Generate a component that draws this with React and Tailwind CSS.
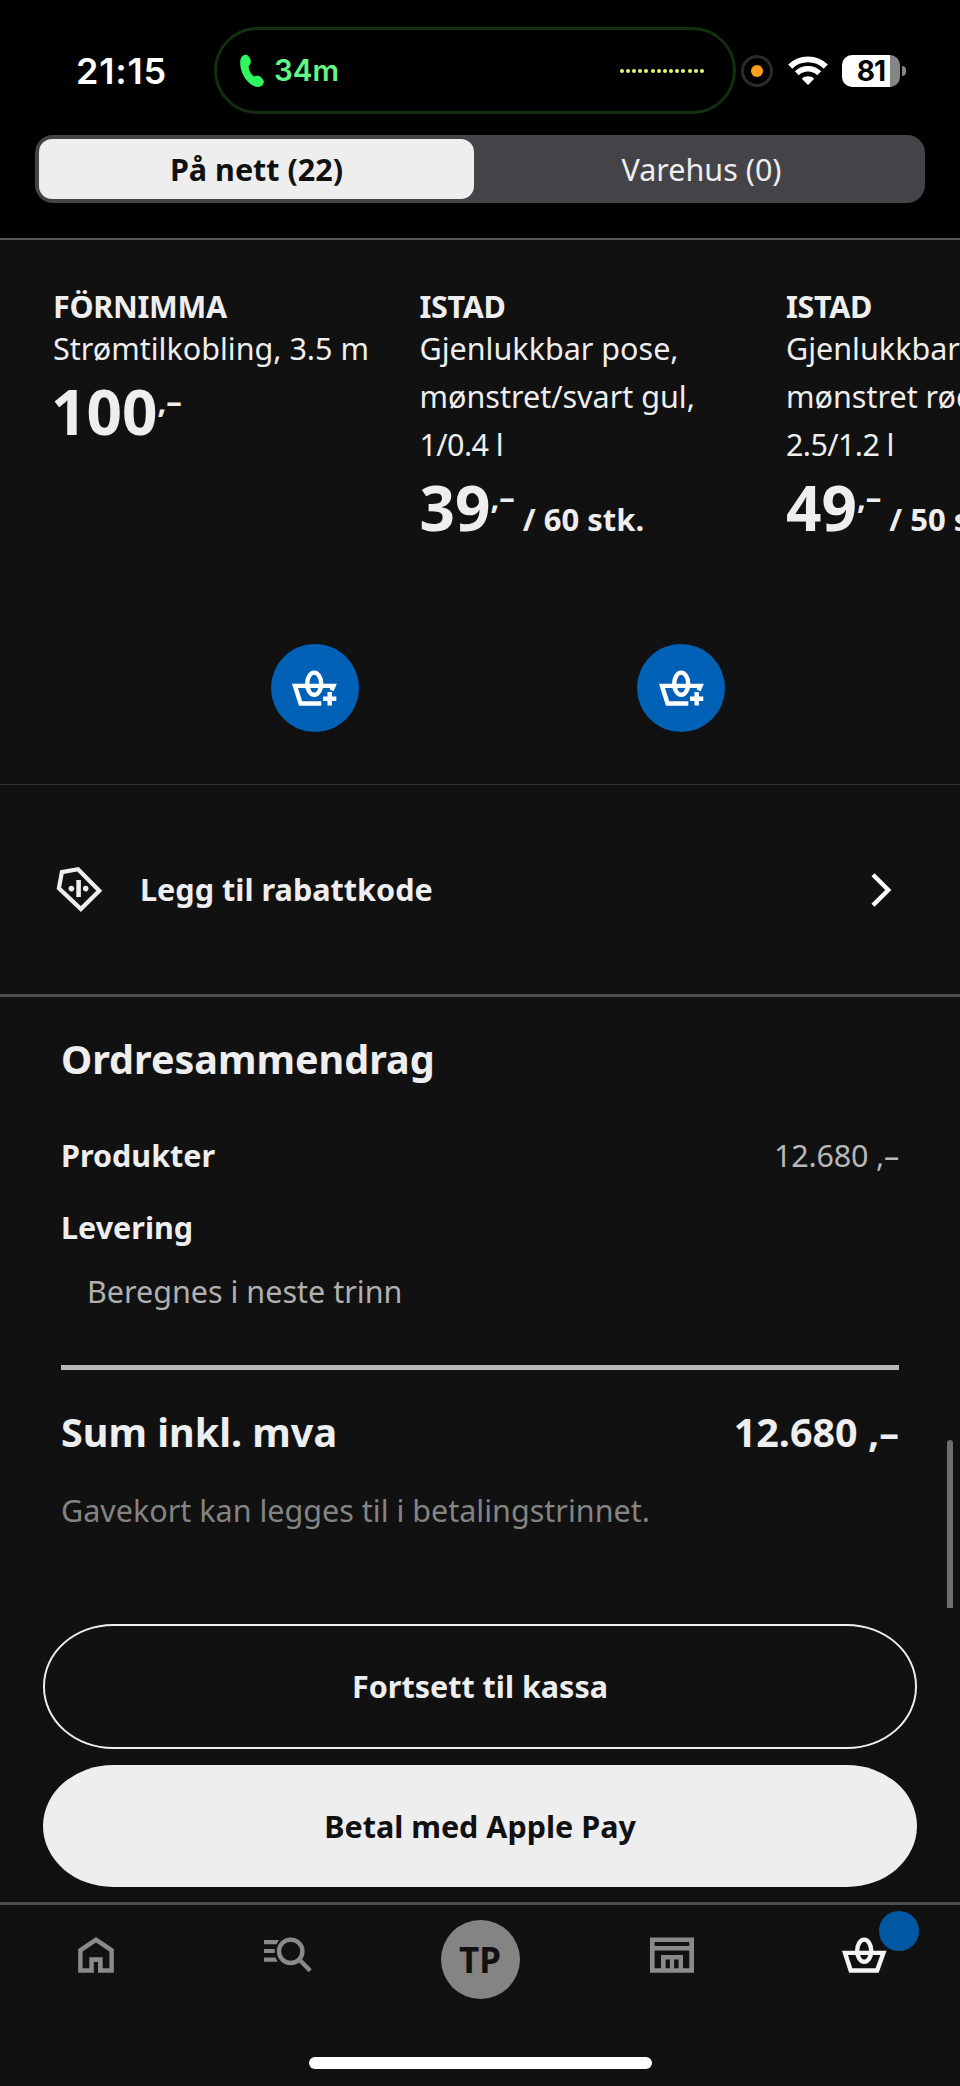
import React, { useState } from 'react'

const products = [
    { name: 'FÖRNIMMA', lines: ['Strømtilkobling, 3.5 m'], price: '100' },
    { name: 'ISTAD', lines: ['Gjenlukkbar pose,', 'mønstret/svart gul,'], size: '1/0.4 l', price: '39', unit: '/ 60 stk.' },
    { name: 'ISTAD', lines: ['Gjenlukkbar pose,', 'mønstret rød/rosa,'], size: '2.5/1.2 l', price: '49', unit: '/ 50 stk.' },
]

const PhoneIcon = () => (
    <svg width="28" height="36" viewBox="0 0 28 36" fill="#30f75f">
        <path d="M7 1.8C9.6 1.2 11.2 3.4 12.4 6.6C13.4 9.2 12.8 11 10.6 13.4C10.4 16.8 13 21.2 16 23.4C19 22.4 20.8 22.4 22.6 24C25 26.2 26.4 27.8 25.6 30C24.8 32.4 22.6 34 20 34C15.6 33.8 11.4 31 8 26.6C4.6 22 2.2 15.6 2.2 10C2.2 5.6 3.6 2.6 7 1.8Z" />
    </svg>
)

const WifiIcon = () => (
    <svg width="40" height="30" viewBox="0 0 40 30" fill="none" stroke="#fff">
        <path d="M2.2 10.6C12 .9 28 .9 37.8 10.6" strokeWidth="5.8" />
        <path d="M8.8 17.3C15 11.3 25 11.3 31.2 17.3" strokeWidth="5.6" />
        <path d="M20 29L13.8 22.7C17.2 19.5 22.8 19.5 26.2 22.7Z" fill="#fff" stroke="none" />
    </svg>
)

const BasketIcon = ({ add }) => (
    <svg width="49" height="38" viewBox="0 0 49 38" fill="none" stroke="currentColor" strokeWidth="4.4">
        {add ? (
            <>
                <path d="M31.3 34.5H10.6L5 16.9H43.5L41.6 21.4" />
                <path d="M33 29.7H46.3M39.7 23V36.4" />
            </>
        ) : (
            <path d="M5 16.9H43.4L37.1 34.5H10.7Z" />
        )}
        <ellipse cx="24.2" cy="14.7" rx="7" ry="11.1" />
    </svg>
)

const TagIcon = () => (
    <svg width="48" height="49" viewBox="0 0 48 49" fill="none" stroke="#eee" strokeWidth="4.2">
        <path d="M5.9 7.1L22 4.3L43.3 25.7L24.9 44L2.9 23.2Z" />
        <path d="M22.6 15V32" strokeWidth="4.6" />
        <circle cx="15.4" cy="23.6" r="2.8" fill="#eee" stroke="none" />
        <circle cx="29.7" cy="23.6" r="2.8" fill="#eee" stroke="none" />
    </svg>
)

const HomeIcon = () => (
    <svg width="40" height="40" viewBox="0 0 40 40" fill="currentColor" fillRule="evenodd">
        <path d="M20 2L37.8 14V37.8H22V27H17.8V37.8H2.2V14ZM20 7.5L6.6 16.6V33.3H13.3V22.2H26.7V33.3H33.4V16.6Z" />
    </svg>
)

const SearchIcon = () => (
    <svg width="52" height="40" viewBox="0 0 52 40" fill="currentColor">
        <path d="M2 5H16.8L14.6 9.2H2ZM2 13.9H12.8V18.1H2ZM2 22.4H13.4L15.6 26.8H2Z" />
        <circle cx="28.7" cy="16.3" r="11.7" fill="none" stroke="currentColor" strokeWidth="4.4" />
        <path d="M37 24.2L48.2 35.7" stroke="currentColor" strokeWidth="4.4" />
    </svg>
)

const StoreIcon = () => (
    <svg width="48" height="40" viewBox="0 0 48 40" fill="currentColor" fillRule="evenodd">
        <path d="M2 2.6H46V37.8H2ZM6.6 7V11.1H41.3V7ZM6.6 15.6V33.2H13V20H35V33.2H41.3V15.6ZM17.6 24.4V33.2H21.9V24.4ZM26.1 24.4V33.2H30.6V24.4Z" />
    </svg>
)

const StatusBar = () => (
    <div className="mt-[27px] flex h-[87px] items-center font-['Inter',sans-serif]">
        <span className="ml-[76px] w-[138px] text-[36px] font-semibold leading-none tracking-[0.8px] text-white">21:15</span>
        <div className="flex h-full w-[522px] items-center rounded-full border-[3px] border-[#12300f] pl-[21px] pr-[29px]">
            <PhoneIcon />
            <span className="ml-2 text-[29.5px] font-semibold leading-none text-[#62f583]">34m</span>
            <div className="ml-auto flex gap-[2.2px]">
                {Array.from({ length: 14 }, (_, i) => (
                    <span key={i} className="h-1 w-1 rounded-full bg-[#e8f670]" />
                ))}
            </div>
        </div>
        <div className="ml-[5px] flex h-8 w-8 items-center justify-center rounded-full border-[3px] border-[#2b2b2b]">
            <span className="h-3 w-3 rounded-full bg-[#ff9f1a]" />
        </div>
        <div className="ml-[15px]">
            <WifiIcon />
        </div>
        <div className="ml-[14px] flex h-8 w-[58px] items-center justify-center rounded-[10px] bg-[linear-gradient(to_right,#fff_48px,#858585_48px)] text-[28px] font-bold leading-none tracking-[-1px] text-black">
            81
        </div>
        <span className="ml-0.5 h-[10px] w-1 rounded-r-full bg-[#858585]" />
    </div>
)

const ProductCard = ({ product }) => (
    <div className="flex h-[444px] w-[366.5px] shrink-0 flex-col">
        <h3 className="text-[30.5px] font-bold leading-9 tracking-[-0.3px]">{product.name}</h3>
        {product.lines.map((line) => (
            <p key={line} className="whitespace-nowrap text-[30.5px] leading-[48px]">{line}</p>
        ))}
        {product.size && (
            <p className="whitespace-nowrap text-[30.5px] leading-[48px] tracking-[-0.6px]">{product.size}</p>
        )}
        <div className={`mt-px flex items-baseline whitespace-nowrap font-bold ${product.unit ? '' : '-ml-0.5'}`}>
            <span className="text-[62px] leading-[76px]">{product.price}</span>
            <span className="mt-2 self-start text-[31px] leading-10">,–</span>
            {product.unit && <span className="ml-2 text-[31px] leading-10">{product.unit}</span>}
        </div>
        <button className="mr-[61px] mt-auto flex h-[88px] w-[88px] items-center justify-center self-end rounded-full bg-[#0061b6] text-white">
            <BasketIcon add />
        </button>
    </div>
)

const App = () => {
    const [tab, setTab] = useState('online')

    const tabClass = (name) =>
        tab === name
            ? 'w-[435px] rounded-[13px] bg-[#eee] pt-0.5 font-bold text-[#111]'
            : 'flex-1 pl-2 pt-0.5 text-[#eee]'

    return (
        <div className="relative flex h-[2086px] w-[960px] flex-col overflow-hidden bg-[#111] font-['Noto_Sans',sans-serif] text-[#eee]">
            <header className="flex h-[240px] shrink-0 flex-col border-b-2 border-[#545454] bg-black">
                <StatusBar />
                <div className="mx-[35px] mt-[21px] flex h-[68px] rounded-[18px] bg-[#444347] p-1 text-[30.5px]">
                    <button className={tabClass('online')} onClick={() => setTab('online')}>På nett (22)</button>
                    <button className={tabClass('store')} onClick={() => setTab('store')}>Varehus (0)</button>
                </div>
            </header>

            {/* Suggested products */}
            <section className="flex h-[545px] shrink-0 overflow-hidden border-b border-[#333] pl-[53px] pt-12">
                {products.map((product, index) => (
                    <ProductCard key={index} product={product} />
                ))}
            </section>

            {/* Discount code */}
            <button className="flex h-[212px] shrink-0 items-center border-b-[3px] border-[#4e4e4e] pl-14 pr-[66px]">
                <TagIcon />
                <span className="ml-9 text-[30.6px] font-bold">Legg til rabattkode</span>
                <svg className="ml-auto" width="24" height="38" viewBox="0 0 24 38" fill="none" stroke="#fff" strokeWidth="4.4">
                    <path d="M3 3.7L18.3 19L3 34.3" />
                </svg>
            </button>

            {/* Order summary */}
            <section className="flex shrink-0 flex-col px-[61px] pt-[37px]">
                <h2 className="text-[39.5px] font-bold leading-[50px]">Ordresammendrag</h2>
                <div className="mt-[47px] flex justify-between text-[30.5px] leading-[48px]">
                    <span className="font-bold">Produkter</span>
                    <span className="tracking-[-0.2px] text-[#b8b8b8]">12.680 ,–</span>
                </div>
                <div className="mt-6 text-[30.5px] font-bold leading-[48px]">Levering</div>
                <div className="mt-4 pl-[26px] text-[30.5px] leading-[48px] text-[#b0b0b0]">Beregnes i neste trinn</div>
                <div className="mt-[50px] h-[5px] bg-[#b8b8b8]" />
                <div className="mt-[37px] flex justify-between text-[39.5px] font-bold leading-[50px]">
                    <span>Sum inkl. mva</span>
                    <span>12.680 ,–</span>
                </div>
                <p className="mt-[29px] text-[30.5px] leading-[48px] text-[#848484]">Gavekort kan legges til i betalingstrinnet.</p>
            </section>

            <div className="mt-[90px] flex shrink-0 flex-col gap-4 px-[43px] text-[30.5px] font-bold">
                <button className="h-[125px] rounded-[70px/62px] border-[2.5px] border-[#eee] pt-px">Fortsett til kassa</button>
                <button className="h-[122px] rounded-[70px/61px] bg-[#eee] pt-0.5 text-[#111]">Betal med Apple Pay</button>
            </div>

            <nav className="mt-[15px] flex flex-1 flex-col items-center border-t-[3px] border-[#4e4e4e]">
                <div className="grid h-[99px] w-full grid-cols-5 items-center justify-items-center text-[#8a8a8a]">
                    <HomeIcon />
                    <SearchIcon />
                    <div className="mt-[10px] flex h-[79px] w-[79px] items-center justify-center rounded-full bg-[#848484] pt-0.5 text-[35px] font-bold text-[#111]">TP</div>
                    <StoreIcon />
                    <div className="relative text-[#f5f5f5]">
                        <BasketIcon />
                        <span className="absolute -top-[25px] left-[39px] h-10 w-10 rounded-full bg-[#0058a3]" />
                    </div>
                </div>
                <div className="mt-[53px] h-3 w-[343px] rounded-full bg-white" />
            </nav>

            <div className="absolute right-[7px] top-[1440px] h-[168px] w-1.5 rounded-t-full bg-[#6d6d6d]" />
        </div>
    )
}

export default App
